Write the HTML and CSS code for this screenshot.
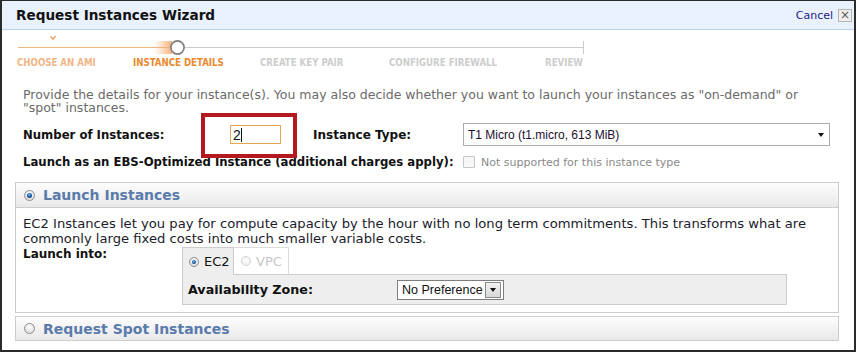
FILE: index.html
```html
<!DOCTYPE html>
<html lang="en">
<head>
    <meta charset="UTF-8">
    <title>Request Instances Wizard</title>
    <link rel="stylesheet" href="styles.css">
</head>
<body>
    <div class="wizard">
        <div class="wizard-head">
            <h1>Request Instances Wizard</h1>
            <div class="head-actions">
                <a href="#" class="cancel">Cancel</a>
                <span class="close-btn">&times;</span>
            </div>
        </div>

        <!-- progress through the wizard -->
        <div class="steps">
            <svg class="track" width="572" height="22" viewBox="0 0 572 22">
                <defs>
                    <linearGradient id="glow" x1="0" x2="1" y1="0" y2="0">
                        <stop offset="0" stop-color="#f7b883" stop-opacity="0"/>
                        <stop offset="1" stop-color="#f4a867" stop-opacity="0.9"/>
                    </linearGradient>
                </defs>
                <path d="M34.5 1.5 L37 4 L39.5 1" fill="none" stroke="#f2a66a" stroke-width="1.6"/>
                <line x1="2" y1="12.5" x2="150" y2="12.5" stroke="#f1b584" stroke-width="1"/>
                <line x1="150" y1="12.5" x2="567" y2="12.5" stroke="#cbcbcb" stroke-width="1"/>
                <line x1="567.5" y1="6" x2="567.5" y2="19" stroke="#cbcbcb" stroke-width="1"/>
                <rect x="138" y="6" width="18" height="13" fill="url(#glow)"/>
                <circle cx="161.5" cy="12.5" r="6.6" fill="#fff" stroke="#7d7d7d" stroke-width="1.6"/>
            </svg>
            <div class="step-labels">
                <span class="step step-done">CHOOSE AN AMI</span>
                <span class="step step-current">INSTANCE DETAILS</span>
                <span class="step">CREATE KEY PAIR</span>
                <span class="step">CONFIGURE FIREWALL</span>
                <span class="step">REVIEW</span>
            </div>
        </div>

        <div class="content">
            <div class="form-top">
                <p class="intro">Provide the details for your instance(s). You may also decide whether you want to launch your instances as "on-demand" or "spot" instances.</p>

                <div class="row row-count">
                    <label class="lbl lbl-count">Number of Instances:</label>
                    <div class="count-wrap">
                        <div class="count-field">2<span class="caret"></span></div>
                        <div class="highlight"></div>
                    </div>
                    <label class="lbl lbl-type">Instance Type:</label>
                    <div class="select select-type">
                        <span>T1 Micro (t1.micro, 613 MiB)</span>
                        <span class="arrow"></span>
                    </div>
                </div>

                <div class="row row-ebs">
                    <label class="lbl lbl-ebs">Launch as an EBS-Optimized Instance (additional charges apply):</label>
                    <span class="checkbox"></span>
                    <span class="muted">Not supported for this instance type</span>
                </div>
            </div>

            <div class="panel">
                <div class="panel-head">
                    <span class="radio radio-on"></span>
                    <span class="panel-title">Launch Instances</span>
                </div>
                <div class="panel-body">
                    <p class="panel-text">EC2 Instances let you pay for compute capacity by the hour with no long term commitments. This transforms what are commonly large fixed costs into much smaller variable costs.</p>
                    <div class="launch-into">
                        <div class="lbl lbl-into">Launch into:</div>
                        <div class="tabs-wrap">
                            <div class="tabs">
                                <span class="tab tab-active"><span class="radio radio-on radio-sm"></span>EC2</span>
                                <span class="tab tab-disabled"><span class="radio radio-disabled radio-sm"></span>VPC</span>
                                <span class="tab-fill"></span>
                            </div>
                            <div class="tab-panel">
                                <span class="lbl lbl-zone">Availability Zone:</span>
                                <div class="select select-zone">
                                    <span>No Preference</span>
                                    <span class="dd-btn"><span class="arrow"></span></span>
                                </div>
                            </div>
                        </div>
                    </div>
                </div>
            </div>

            <div class="panel panel-spot">
                <div class="panel-head">
                    <span class="radio"></span>
                    <span class="panel-title">Request Spot Instances</span>
                </div>
            </div>
        </div>
    </div>
</body>
</html>
```

FILE: styles.css
```css
* {
    box-sizing: border-box;
}
body {
    margin: 0;
    background-color: #fff;
    font-family: "DejaVu Sans", Verdana, sans-serif;
    font-size: 12px;
    color: #1b1b2b;
}
.wizard {
    width: 856px;
    height: 352px;
    border: 2px solid #2b2b2b;
    border-top-width: 1px;
    box-shadow: 0 1px 1px #9a9a9a;
    background-color: #fff;
}
.wizard-head {
    height: 29px;
    display: flex;
    align-items: center;
    justify-content: space-between;
    padding: 0 2px 0 14px;
    background-color: #e9f1fc;
    border-bottom: 1px solid #bdd2ea;
}
h1 {
    margin: 0;
    font-size: 13.6px;
    font-weight: bold;
    color: #111;
}
.head-actions {
    display: flex;
    align-items: center;
    gap: 5px;
}
.cancel {
    font-size: 11px;
    color: #22228a;
    text-decoration: none;
}
.close-btn {
    width: 14px;
    height: 13px;
    display: flex;
    align-items: center;
    justify-content: center;
    border: 1px solid #b5b5b5;
    background-color: #eee;
    color: #555;
    font-size: 12px;
    line-height: 1;
}

/* wizard steps */
.steps {
    padding: 5px 0 0 14px;
}
.track {
    display: block;
}
.step-labels {
    display: flex;
    padding-left: 1px;
    height: 12px;
    font-family: "DejaVu Sans Condensed", "DejaVu Sans", sans-serif;
    font-stretch: condensed;
    font-size: 9.6px;
    font-weight: bold;
    line-height: 12px;
    color: #cdcdcd;
}
.step {
    white-space: nowrap;
}
.step:nth-child(1) { width: 116px; }
.step:nth-child(2) { width: 127px; }
.step:nth-child(3) { width: 129px; }
.step:nth-child(4) { width: 156px; }
.step-done {
    color: #f2b588;
}
.step-current {
    color: #e98a2f;
}

/* form */
.content {
    padding: 0 15px 0 13px;
}
.form-top {
    padding-left: 8px;
}
.intro {
    margin: 19px 0 0;
    padding-right: 20px;
    font-size: 12.5px;
    line-height: 13px;
    color: #6a6a6a;
}
.row {
    display: flex;
    align-items: center;
}
.row > * {
    flex-shrink: 0;
}
.lbl {
    font-weight: bold;
    color: #111;
    white-space: nowrap;
}
.row-count {
    margin-top: 9px;
    height: 23px;
}
.lbl-count {
    width: 207px;
    font-size: 11.7px;
}
.count-wrap {
    position: relative;
    width: 51px;
    height: 19px;
}
.count-field {
    height: 19px;
    display: flex;
    align-items: center;
    padding-left: 2px;
    border: 1px solid #e3a852;
    font-family: "Liberation Sans", Arial, sans-serif;
    font-size: 14px;
    color: #111;
}
.caret {
    width: 1px;
    height: 14px;
    background-color: #111;
}
/* red annotation drawn over the field */
.highlight {
    position: absolute;
    left: -29px;
    top: -12px;
    width: 96px;
    height: 45px;
    border: 4px solid #b3191f;
}
.lbl-type {
    width: 150px;
    margin-left: 32px;
}
.select {
    display: flex;
    align-items: center;
    justify-content: space-between;
    background-color: #fff;
    font-family: "Liberation Sans", Arial, sans-serif;
    color: #1c1030;
}
.select-type {
    width: 367px;
    height: 23px;
    padding: 0 5px 0 4px;
    border: 1px solid #adadad;
    font-size: 12px;
}
.arrow {
    width: 0;
    height: 0;
    border-left: 3.5px solid transparent;
    border-right: 3.5px solid transparent;
    border-top: 4px solid #111;
}
.row-ebs {
    margin-top: 6px;
    height: 20px;
}
.lbl-ebs {
    width: 440px;
    font-size: 11.7px;
}
.checkbox {
    width: 12px;
    height: 12px;
    border: 1px solid #c8c8c8;
    border-radius: 1px;
    background-color: #f6f6f6;
}
.muted {
    margin-left: 6px;
    font-size: 11px;
    color: #8a8a8a;
}

/* panels */
.panel {
    margin-top: 10px;
    border: 1px solid #cdcdcd;
}
.panel-head {
    height: 25px;
    display: flex;
    align-items: center;
    padding-left: 8px;
    background: linear-gradient(#fdfdfd, #e9e9e9);
    border-bottom: 1px solid #cdcdcd;
}
.panel-title {
    margin-left: 8px;
    font-size: 14px;
    font-weight: bold;
    color: #5a7bab;
}
.radio {
    width: 11px;
    height: 11px;
    flex-shrink: 0;
    display: inline-flex;
    align-items: center;
    justify-content: center;
    border: 1px solid #8e8e8e;
    border-radius: 50%;
    background: radial-gradient(circle at 50% 35%, #fff, #d4d4d4);
}
.radio-on::after {
    content: "";
    width: 5px;
    height: 5px;
    border-radius: 50%;
    background: radial-gradient(circle at 45% 35%, #7cc8ff 0, #1c5fa6 45%, #0c2b57 100%);
}
.radio-sm {
    width: 10px;
    height: 10px;
    margin-right: 5px;
}
.radio-sm.radio-on::after {
    width: 4px;
    height: 4px;
}
.radio-disabled {
    border-color: #d2d2d2;
    background: radial-gradient(circle at 50% 35%, #fff, #ececec);
}
.panel-body {
    padding: 9px 0 7px 7px;
}
.panel-text {
    margin: 0;
    font-size: 13.15px;
    line-height: 14.5px;
}
.launch-into {
    display: flex;
    align-items: flex-start;
    margin-top: 1px;
}
.lbl-into {
    width: 159px;
    line-height: 14px;
}
.tabs-wrap {
    width: 605px;
}
.tabs {
    display: flex;
    height: 28px;
}
.tab {
    display: flex;
    align-items: center;
    font-size: 13px;
}
.tab-active {
    width: 52px;
    padding-left: 6px;
    background-color: #eee;
    border: 1px solid #cdcdcd;
    border-bottom: none;
    color: #111;
}
.tab-disabled {
    width: 55px;
    padding-left: 7px;
    border: 1px solid #dcdcdc;
    border-left: none;
    border-bottom-color: #cdcdcd;
    color: #c6c6c6;
}
.tab-fill {
    flex: 1;
    border-bottom: 1px solid #cdcdcd;
}
.tab-panel {
    height: 30px;
    display: flex;
    align-items: center;
    padding-left: 5px;
    background-color: #eee;
    border: 1px solid #cdcdcd;
    border-top: none;
}
.lbl-zone {
    width: 209px;
    font-size: 12.7px;
}
.select-zone {
    width: 107px;
    height: 20px;
    padding: 0 2px 0 4px;
    border: 1px solid #7d7d7d;
    font-size: 12.5px;
    color: #111;
}
.dd-btn {
    width: 16px;
    height: 16px;
    display: flex;
    align-items: center;
    justify-content: center;
    border: 1px solid #8a8a8a;
    background: linear-gradient(#f2f2f2, #d8d8d8);
}
.panel-spot {
    margin-top: 3px;
}
.panel-spot .panel-head {
    height: 23px;
    border-bottom: none;
}
```
